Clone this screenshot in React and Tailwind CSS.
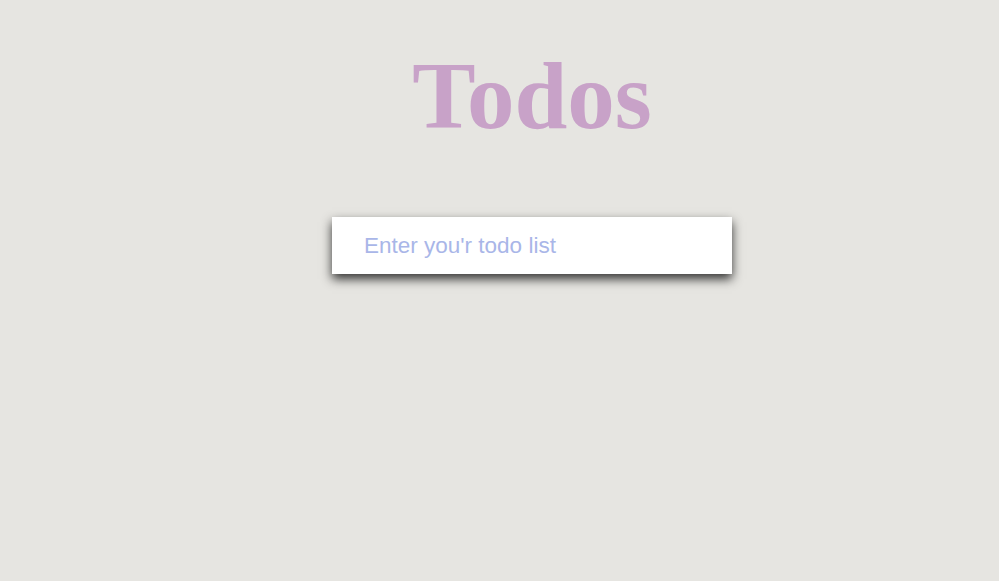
import React, { useState } from 'react'

const App = () => {
  const [value, setValue] = useState('')

  return (
    <div className="min-h-[581px] w-full bg-[#e6e5e1] pl-[65px]">
      <div className="flex flex-col items-center pt-[36px]">
        <h1
          className="text-[95px] font-bold leading-[120px] text-[#c8a2c8]"
          style={{ fontFamily: '"Liberation Serif", "Times New Roman", serif' }}
        >
          Todos
        </h1>
        <input
          type="text"
          value={value}
          onChange={(e) => setValue(e.target.value)}
          placeholder="Enter you'r todo list"
          className="mt-[61px] h-[57px] w-[400px] bg-white pl-8 pr-4 text-[22.5px] text-gray-700 outline-none shadow-[0_5px_10px_rgba(0,0,0,0.78)] placeholder:text-[#a9b6e8]"
          style={{ fontFamily: '"Liberation Sans", Arial, sans-serif' }}
        />
      </div>
    </div>
  )
}

export default App
